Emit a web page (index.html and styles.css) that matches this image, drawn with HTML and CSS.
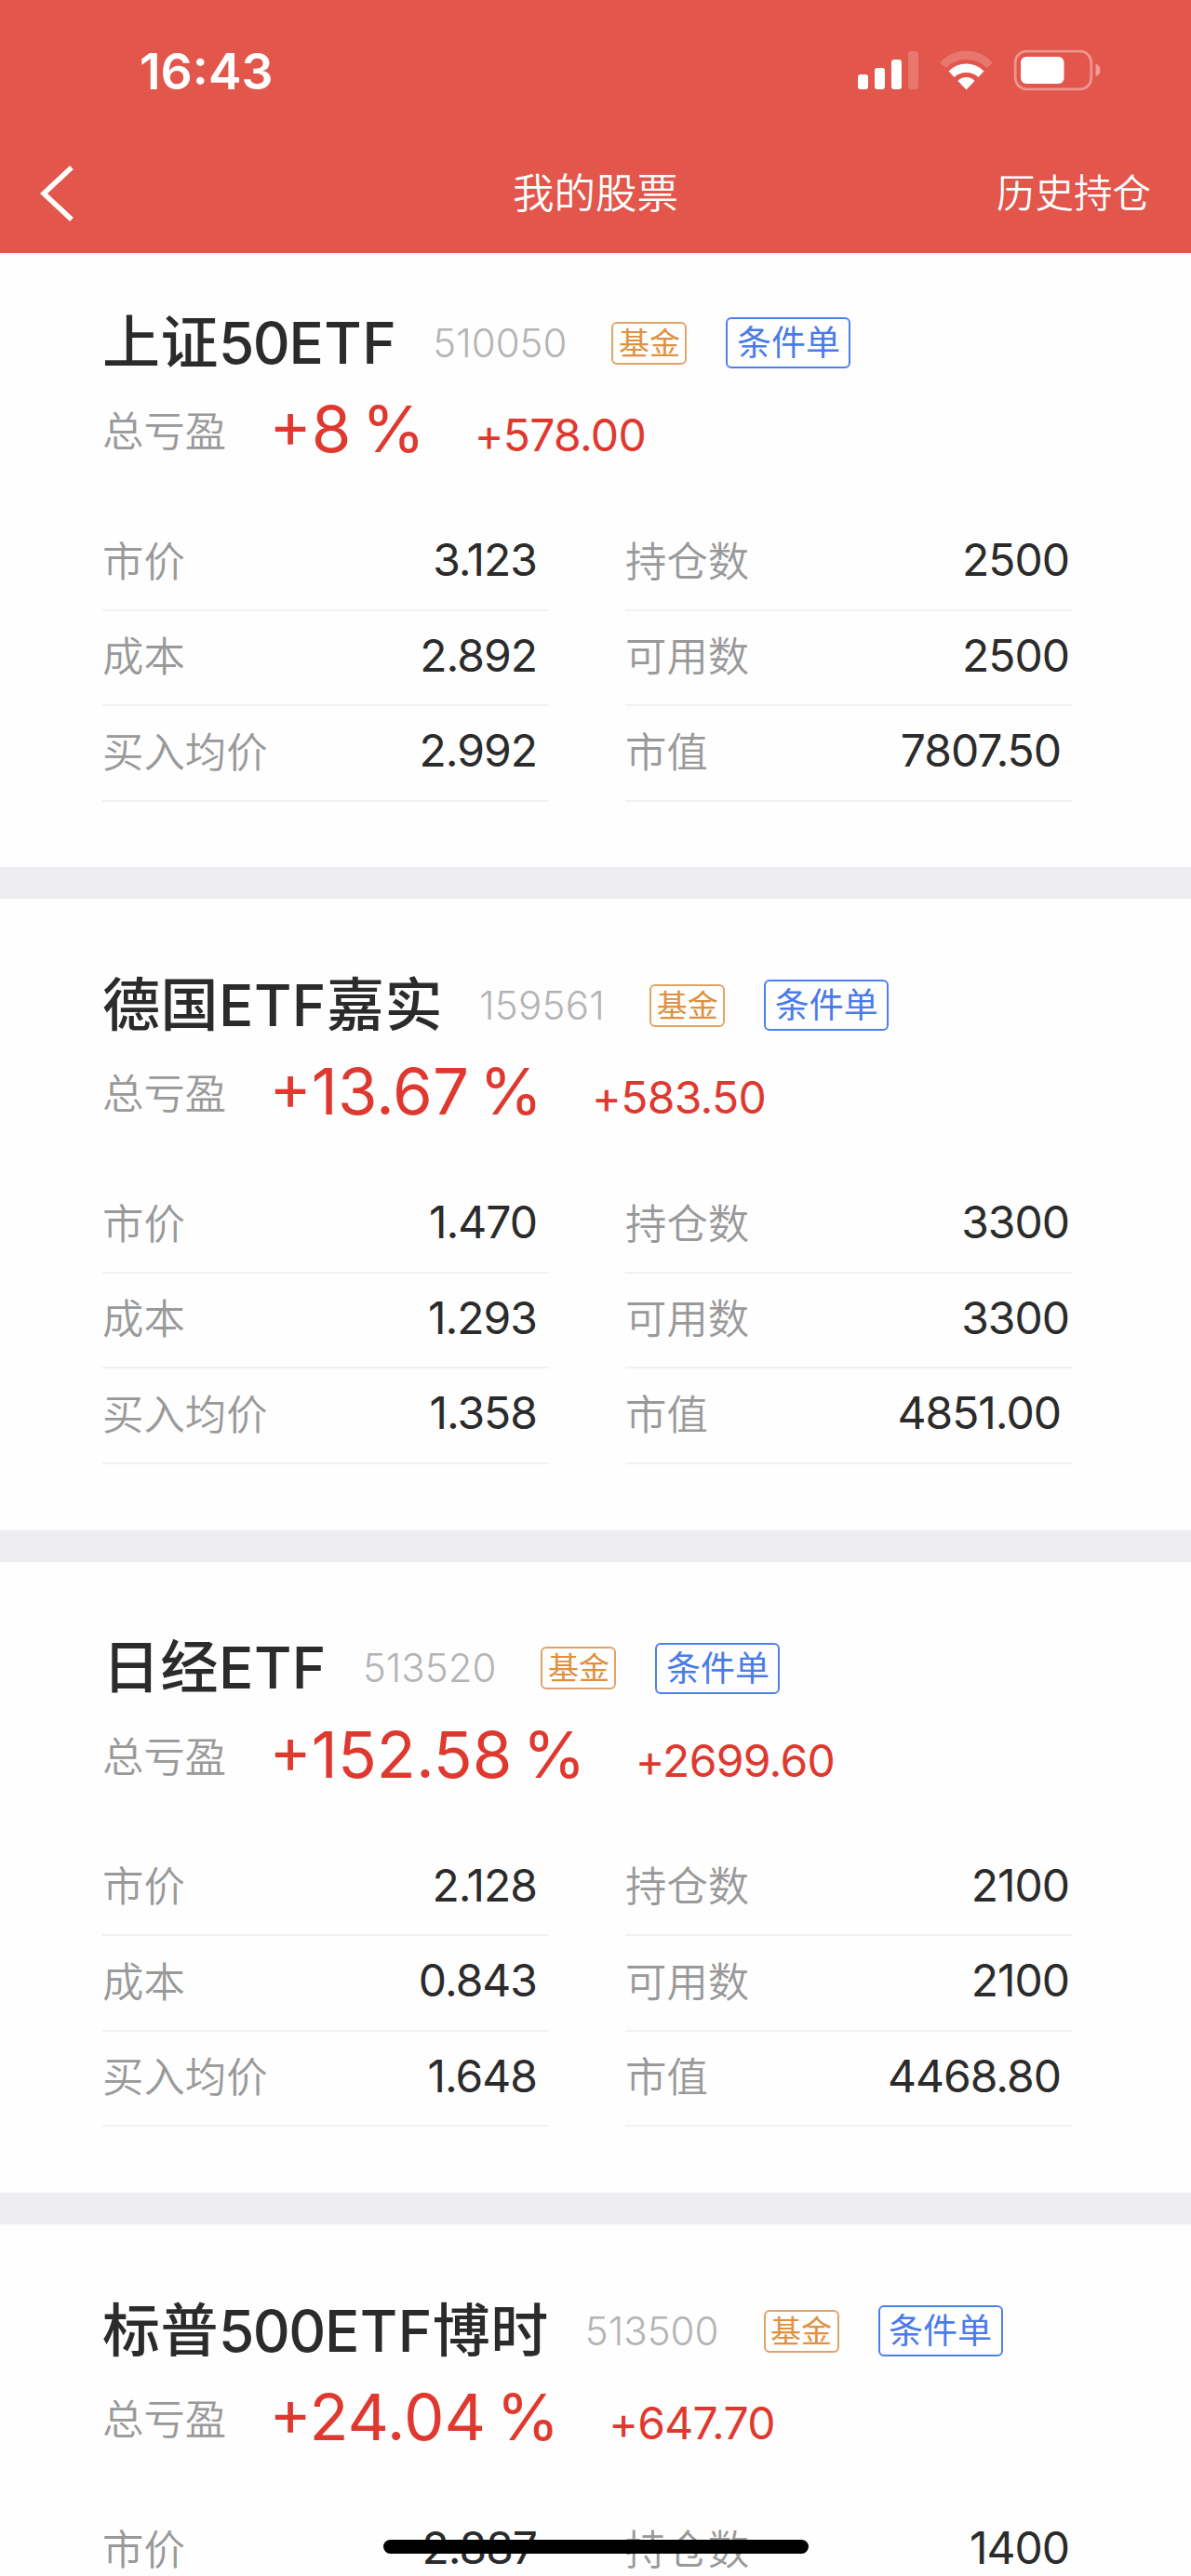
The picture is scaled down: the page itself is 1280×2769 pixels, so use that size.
FILE: index.html
```html
<!DOCTYPE html>
<html lang="zh-CN">
<head>
<meta charset="utf-8">
<title>我的股票</title>
<link rel="stylesheet" href="styles.css">
</head>
<body>
<div class="screen">
  <header class="header">
    <div class="status">
      <span class="time">16:43</span>
      <svg class="status-icons" width="264" height="46" viewBox="920 52 264 46" fill="#fff">
        <rect x="922" y="80" width="11" height="16" rx="3"/>
        <rect x="940" y="73" width="11" height="23" rx="3"/>
        <rect x="958" y="64" width="11" height="32" rx="3"/>
        <rect x="976" y="55" width="11" height="41" rx="3" opacity=".2"/>
        <path d="M1010 67.500Q1022 54.500 1038.500 54.500T1067 67.500L1060.500 73Q1052 64 1038.500 64T1016.500 73Z" opacity=".2"/>
        <path d="M1019.500 76.500Q1027.500 68.500 1038.500 68.500T1057.500 76.500L1051.500 83Q1046 78 1038.500 78T1025.500 83Z"/>
        <path d="M1029.500 87Q1033 83 1038.500 83T1047.500 87L1038.500 96.500Z"/>
        <rect x="1091.200" y="55.200" width="81.600" height="40.600" rx="12" fill="none" stroke="#fff" stroke-width="2.800" opacity=".38"/>
        <rect x="1097" y="61" width="46.500" height="29" rx="6"/>
        <path d="M1177.500 68.500Q1182.500 70.500 1182.500 75.500T1177.500 82Z" opacity=".42"/>
      </svg>
    </div>
    <nav class="nav">
      <svg class="back" width="38" height="62" viewBox="0 0 38 62" fill="none" stroke="#fff" stroke-width="5.500"><path d="M34 3L4 31L34 59"/></svg>
      <h1 class="nav-title">我的股票</h1>
      <span class="nav-link">历史持仓</span>
    </nav>
  </header>
  <main>
    <section class="card card-first">
      <div class="head"><h2 class="name">上证<span class="num">50</span>ETF</h2><span class="code">510050</span><span class="tag tag-fund">基金</span><span class="tag tag-order">条件单</span></div>
      <div class="profit"><span class="profit-label">总亏盈</span><span class="percent">+8 %</span><span class="amount">+578.00</span></div>
      <div class="cols">
        <dl class="col">
          <div class="row"><dt>市价</dt><dd>3.123</dd></div>
          <div class="row"><dt>成本</dt><dd>2.892</dd></div>
          <div class="row"><dt>买入均价</dt><dd>2.992</dd></div>
        </dl>
        <dl class="col col-right">
          <div class="row"><dt>持仓数</dt><dd>2500</dd></div>
          <div class="row"><dt>可用数</dt><dd>2500</dd></div>
          <div class="row"><dt>市值</dt><dd class="inset">7807.50</dd></div>
        </dl>
      </div>
    </section>
    <section class="card">
      <div class="head"><h2 class="name">德国ETF嘉实</h2><span class="code code-loose">159561</span><span class="tag tag-fund">基金</span><span class="tag tag-order">条件单</span></div>
      <div class="profit"><span class="profit-label">总亏盈</span><span class="percent">+13.67 %</span><span class="amount">+583.50</span></div>
      <div class="cols">
        <dl class="col">
          <div class="row"><dt>市价</dt><dd>1.470</dd></div>
          <div class="row"><dt>成本</dt><dd>1.293</dd></div>
          <div class="row"><dt>买入均价</dt><dd>1.358</dd></div>
        </dl>
        <dl class="col col-right">
          <div class="row"><dt>持仓数</dt><dd>3300</dd></div>
          <div class="row"><dt>可用数</dt><dd>3300</dd></div>
          <div class="row"><dt>市值</dt><dd class="inset">4851.00</dd></div>
        </dl>
      </div>
    </section>
    <section class="card">
      <div class="head"><h2 class="name">日经ETF</h2><span class="code">513520</span><span class="tag tag-fund">基金</span><span class="tag tag-order">条件单</span></div>
      <div class="profit"><span class="profit-label">总亏盈</span><span class="percent">+152.58 %</span><span class="amount">+2699.60</span></div>
      <div class="cols">
        <dl class="col">
          <div class="row"><dt>市价</dt><dd>2.128</dd></div>
          <div class="row"><dt>成本</dt><dd>0.843</dd></div>
          <div class="row"><dt>买入均价</dt><dd>1.648</dd></div>
        </dl>
        <dl class="col col-right">
          <div class="row"><dt>持仓数</dt><dd>2100</dd></div>
          <div class="row"><dt>可用数</dt><dd>2100</dd></div>
          <div class="row"><dt>市值</dt><dd class="inset">4468.80</dd></div>
        </dl>
      </div>
    </section>
    <section class="card">
      <div class="head"><h2 class="name">标普<span class="num">500</span>ETF博时</h2><span class="code">513500</span><span class="tag tag-fund">基金</span><span class="tag tag-order">条件单</span></div>
      <div class="profit"><span class="profit-label">总亏盈</span><span class="percent">+24.04 %</span><span class="amount">+647.70</span></div>
      <div class="cols">
        <dl class="col">
          <div class="row"><dt>市价</dt><dd>2.887</dd></div>
        </dl>
        <dl class="col col-right">
          <div class="row"><dt>持仓数</dt><dd>1400</dd></div>
        </dl>
      </div>
    </section>
  </main>
  <div class="home-bar"></div>
</div>
</body>
</html>
```
FILE: styles.css
```css
* { box-sizing: border-box; }
body {
  margin: 0;
  background: #fefefe;
  font-family: Inter, "Noto Sans CJK SC", sans-serif;
  color: #2b2b2b;
}
h1, h2, dl, dd { margin: 0; font-weight: 400; }
.screen { position: relative; width: 1280px; height: 2769px; overflow: hidden; }

.header { height: 272px; background: #e2564b; color: #fff; }
.status {
  display: flex;
  justify-content: space-between;
  padding: 46px 96px 0 150px;
  height: 142px;
}
.time { font-size: 53.500px; line-height: 62px; font-weight: 600; }
.status-icons { margin-top: 6px; }
.nav {
  display: grid;
  grid-template-columns: 1fr auto 1fr;
  align-items: center;
  height: 130px;
  padding: 2px 43px 0 43px;
}
.back { display: block; }
.nav-title { font-size: 44.500px; line-height: 60px; font-weight: 350; }
.nav-link { font-size: 41.500px; line-height: 60px; font-weight: 350; text-align: right; }

.card {
  height: 712.500px;
  padding: 74px 128px 0 110px;
  border-bottom: 34px solid #ededf2;
  white-space: nowrap;
}
.card-first { height: 694px; padding-top: 56px; }

.head { display: flex; align-items: center; height: 81px; }
.name { font-size: 62px; line-height: 80px; font-weight: 500; letter-spacing: .5px; }
.num { letter-spacing: -1.500px; }
.code { margin-left: 39px; font-size: 42px; line-height: 80px; font-weight: 300; color: #b4b4b4; }
.code-loose { letter-spacing: .3px; }
.tag { display: flex; justify-content: center; border-radius: 6px; }
.tag-fund {
  width: 81px;
  margin-left: 48px;
  border: 2px solid #e0a468;
  font-size: 33px;
  line-height: 42px;
  color: #df9040;
}
.tag-order {
  width: 134px;
  margin-left: 42px;
  border: 2px solid #4f80ea;
  font-size: 37px;
  line-height: 51px;
  color: #4a7be8;
}

.profit { display: flex; height: 145px; line-height: 60px; color: #df392f; }
.profit-label { margin-top: 25px; font-size: 44.400px; font-weight: 350; color: #999; }
.percent { margin: 22px 0 0 46px; font-size: 69px; word-spacing: -8px; }
.amount { margin: 29px 0 0 53px; font-size: 48px; letter-spacing: -.7px; }

.cols { display: flex; justify-content: space-between; }
.col { width: 480px; }
.row {
  display: flex;
  justify-content: space-between;
  height: 102.500px;
  padding-right: 3px;
  border-bottom: 2px solid #f1f1f3;
  line-height: 96px;
}
.col:not(.col-right) .row { padding-right: 13px; }
dt { padding-top: 1.500px; font-size: 44.400px; font-weight: 350; color: #999; }
dd { font-size: 48px; letter-spacing: -1px; }
.inset { padding-right: 9px; }

.home-bar {
  position: absolute;
  left: 412px;
  top: 2730px;
  width: 457px;
  height: 15px;
  border-radius: 8px;
  background: #000;
}
```
